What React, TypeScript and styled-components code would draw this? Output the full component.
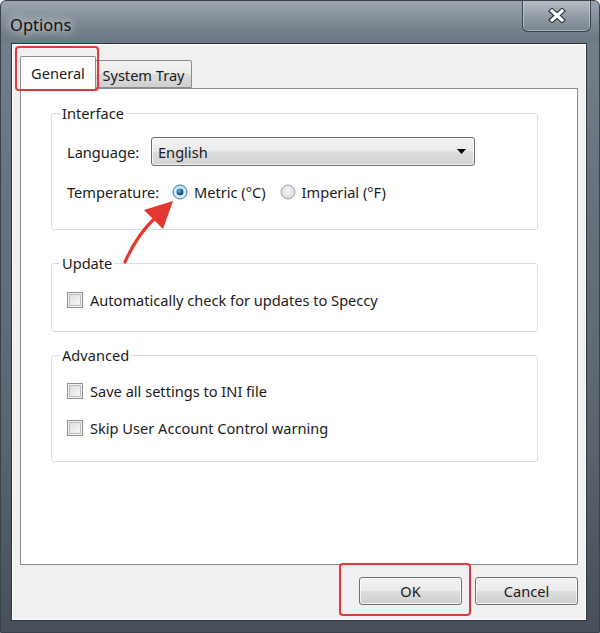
import React from 'react';
import styled, { createGlobalStyle } from 'styled-components';

const Global = createGlobalStyle`
  html, body { margin: 0; padding: 0; background: #ffffff; }
  body { font-family: "Noto Sans", "Open Sans", sans-serif; color: #1b1b1b; }
  * { box-sizing: border-box; }
`;

const Window = styled.div`
  position: relative;
  width: 600px;
  height: 633px;
  display: flex;
  flex-direction: column;
  border: 1px solid #3a424c;
  border-radius: 6px 6px 0 0;
  background: linear-gradient(180deg, #8a95a1 0%, #737f8b 5%, #66727f 30%, #59646f 70%, #464f5a 100%);
  overflow: hidden;
`;

const TitleBar = styled.div`
  height: 42px;
  display: flex;
  justify-content: space-between;
  align-items: flex-start;
  padding: 0 8px 0 9px;
  background: linear-gradient(180deg, rgba(255,255,255,0.16) 0%, rgba(255,255,255,0.04) 45%, rgba(0,0,0,0.06) 100%);
`;

const Title = styled.div`
  margin-top: 12px;
  font-size: 16.5px;
  color: #111;
  text-shadow: 0 0 8px rgba(255,255,255,0.9), 0 0 14px rgba(255,255,255,0.6);
`;

const CloseButton = styled.div`
  width: 69px;
  height: 32px;
  margin-top: -1px;
  display: flex;
  align-items: center;
  justify-content: center;
  border: 1px solid #3c444e;
  border-top: none;
  border-radius: 0 0 6px 6px;
  background: linear-gradient(180deg, rgba(255,255,255,0.26) 0%, rgba(255,255,255,0.1) 50%, rgba(255,255,255,0.03) 100%);
  box-shadow: inset 0 0 0 1px rgba(255,255,255,0.35);
`;

const Client = styled.div`
  flex: 1;
  margin: 0 12px 11px 10px;
  display: flex;
  flex-direction: column;
  background: #f0f0f0;
  border: 1px solid #2f363f;
  box-shadow: inset 0 0 0 1px #ffffff;
  padding: 12px 8px 0 8px;
`;

const TabStrip = styled.div`
  display: flex;
  align-items: flex-end;
  height: 32px;
  position: relative;
  z-index: 1;
`;

const Tab = styled.div<{ $active?: boolean }>`
  position: relative;
  height: ${(p) => (p.$active ? '33px' : '28px')};
  width: ${(p) => (p.$active ? '76px' : '97px')};
  margin-bottom: ${(p) => (p.$active ? '-1px' : '0')};
  margin-left: ${(p) => (p.$active ? '0' : '-1px')};
  display: flex;
  align-items: center;
  justify-content: center;
  padding-top: ${(p) => (p.$active ? '0' : '2px')};
  font-size: 14.6px;
  border: 1px solid #898c95;
  border-bottom: ${(p) => (p.$active ? 'none' : '1px solid #898c95')};
  border-radius: 2px 2px 0 0;
  background: ${(p) => (p.$active ? '#ffffff' : 'linear-gradient(180deg, #f2f2f2 0%, #ebebeb 50%, #dddddd 51%, #cfcfcf 100%)')};
  z-index: ${(p) => (p.$active ? 2 : 1)};
`;

const Highlight = styled.div<{ $t: number; $r: number; $b: number; $l: number }>`
  position: absolute;
  top: ${(p) => p.$t}px;
  right: ${(p) => p.$r}px;
  bottom: ${(p) => p.$b}px;
  left: ${(p) => p.$l}px;
  border: 2px solid #e2383d;
  border-radius: 4px;
  pointer-events: none;
`;

const Panel = styled.div`
  flex: 1;
  display: flex;
  flex-direction: column;
  background: #ffffff;
  border: 1px solid #898c95;
  padding: 14px 39px 0 30px;
`;

const Group = styled.fieldset<{ $mt: number; $pt: number; $pb: number; $gap: number }>`
  margin: ${(p) => p.$mt}px 0 0 0;
  padding: ${(p) => p.$pt}px 12px ${(p) => p.$pb}px 15px;
  border: 1px solid #d5dfe5;
  border-radius: 3px;
  display: flex;
  flex-direction: column;
  gap: ${(p) => p.$gap}px;
  min-width: 0;
`;

const Legend = styled.legend`
  margin-left: -7px;
  padding: 0 2px;
  font-size: 14.6px;
  line-height: 20px;
`;

const Row = styled.div`
  display: flex;
  align-items: center;
  height: 20px;
  font-size: 14.6px;
  white-space: nowrap;
`;

const FieldLabel = styled.span<{ $w: number }>`
  width: ${(p) => p.$w}px;
  flex: none;
`;

const Select = styled.div`
  height: 29px;
  width: 324px;
  display: flex;
  align-items: center;
  justify-content: space-between;
  padding: 0 8px 0 6px;
  border: 1px solid #707070;
  border-radius: 3px;
  background: linear-gradient(180deg, #f3f3f3 0%, #ebebeb 48%, #dddddd 52%, #d2d2d2 100%);
  box-shadow: inset 0 0 0 1px rgba(255,255,255,0.7);
  font-size: 14.6px;
`;

const SelectRow = styled.div`
  display: flex;
  align-items: center;
  height: 29px;
  font-size: 14.6px;
  white-space: nowrap;
`;

const Option = styled.label`
  display: inline-flex;
  align-items: center;
  gap: 6px;
  margin-right: 14px;
`;

const CheckBox = styled.span`
  width: 16px;
  height: 16px;
  flex: none;
  border: 1px solid #8e8f8f;
  background: linear-gradient(135deg, #d8d8d8 0%, #eeeeee 60%, #f8f8f8 100%);
  box-shadow: inset 0 0 0 1px #f4f4f4, inset 0 0 0 2px #bcbcbc;
`;

const CheckRow = styled(Row)`
  gap: 7px;
`;

const Footer = styled.div`
  height: 55px;
  display: flex;
  justify-content: flex-end;
  align-items: flex-start;
  gap: 13px;
  padding-top: 12px;
`;

const ButtonWrap = styled.div`
  position: relative;
  display: flex;
`;

const Button = styled.div`
  width: 103px;
  height: 28px;
  display: flex;
  align-items: center;
  justify-content: center;
  font-size: 14.6px;
  border: 1px solid #707070;
  border-radius: 3px;
  background: linear-gradient(180deg, #f2f2f2 0%, #ebebeb 48%, #dddddd 52%, #cfcfcf 100%);
  box-shadow: inset 0 0 0 1px rgba(255,255,255,0.75);
`;

const ArrowSvg = styled.svg`
  position: absolute;
  left: 110px;
  top: 190px;
  pointer-events: none;
`;

const Radio = ({ checked }: { checked?: boolean }) => (
  <svg width="16" height="16" viewBox="0 0 16 16">
    <defs>
      <radialGradient id={checked ? 'rgOn' : 'rgOff'} cx="50%" cy="40%" r="60%">
        <stop offset="0%" stopColor={checked ? '#9ad0f4' : '#f8f8f8'} />
        <stop offset="100%" stopColor={checked ? '#cfe6f6' : '#d4d4d4'} />
      </radialGradient>
      <radialGradient id="dot" cx="40%" cy="35%" r="70%">
        <stop offset="0%" stopColor="#6bb8ea" />
        <stop offset="60%" stopColor="#1b5c93" />
        <stop offset="100%" stopColor="#0c3a66" />
      </radialGradient>
    </defs>
    <circle cx="8" cy="8" r="7" fill={`url(#${checked ? 'rgOn' : 'rgOff'})`} stroke={checked ? '#3c7fb1' : '#a4a4a4'} strokeWidth="1" />
    <circle cx="8" cy="8" r="5" fill="none" stroke={checked ? '#e6f2fb' : '#ececec'} strokeWidth="1" />
    {checked && <circle cx="8" cy="8" r="3.3" fill="url(#dot)" />}
  </svg>
);

export default function App() {
  return (
    <>
      <Global />
      <Window>
        <TitleBar>
          <Title>Options</Title>
          <CloseButton>
            <svg width="18" height="15" viewBox="0 0 18 15">
              <path d="M4 3 L14 12 M14 3 L4 12" stroke="#2f3640" strokeWidth="5.5" strokeLinecap="square" />
              <path d="M4 3 L14 12 M14 3 L4 12" stroke="#ffffff" strokeWidth="3.2" strokeLinecap="square" />
            </svg>
          </CloseButton>
        </TitleBar>
        <Client>
          <TabStrip>
            <Tab $active>
              General
              <Highlight $t={-11} $r={-4} $b={-2} $l={-6} />
            </Tab>
            <Tab>System Tray</Tab>
          </TabStrip>
          <Panel>
            <Group $mt={0} $pt={14} $pb={27} $gap={16}>
              <Legend>Interface</Legend>
              <SelectRow>
                <FieldLabel $w={84}>Language:</FieldLabel>
                <Select>
                  <span>English</span>
                  <svg width="9" height="5" viewBox="0 0 9 5"><path d="M0 0 H9 L4.5 5 Z" fill="#000" /></svg>
                </Select>
              </SelectRow>
              <Row>
                <FieldLabel $w={105}>Temperature:</FieldLabel>
                <Option><Radio checked />Metric (°C)</Option>
                <Option><Radio />Imperial (°F)</Option>
              </Row>
            </Group>
            <Group $mt={23} $pt={17} $pb={21} $gap={17}>
              <Legend>Update</Legend>
              <CheckRow><CheckBox />Automatically check for updates to Speccy</CheckRow>
            </Group>
            <Group $mt={13} $pt={16} $pb={23} $gap={17}>
              <Legend>Advanced</Legend>
              <CheckRow><CheckBox />Save all settings to INI file</CheckRow>
              <CheckRow><CheckBox />Skip User Account Control warning</CheckRow>
            </Group>
          </Panel>
          <Footer>
            <ButtonWrap>
              <Button>OK</Button>
              <Highlight $t={-14} $r={-9} $b={-11} $l={-20} />
            </ButtonWrap>
            <ButtonWrap>
              <Button>Cancel</Button>
            </ButtonWrap>
          </Footer>
        </Client>
        <ArrowSvg width="70" height="80" viewBox="0 0 70 80">
          <path d="M14 71 Q26 44 44 27" stroke="#e2382f" strokeWidth="3.2" fill="none" strokeLinecap="round" />
          <path d="M62 10 L33 19 L52 38 Z" fill="#e2382f" />
        </ArrowSvg>
      </Window>
    </>
  );
}
